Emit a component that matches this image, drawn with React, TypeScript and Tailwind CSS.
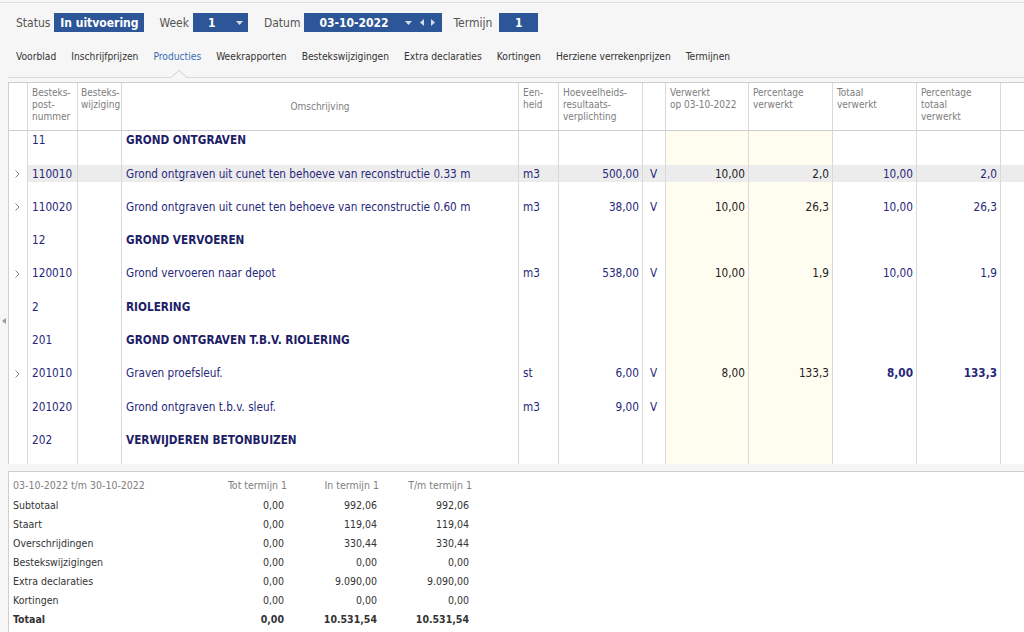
import React from "react";

type Row = {
  arrow?: boolean;
  post: string;
  desc: string;
  bold?: boolean;
  unit?: string;
  qty?: string;
  v?: string;
  done?: string;
  pct?: string;
  tot?: string;
  pctTot?: string;
  strongTot?: boolean;
  hl?: boolean;
};

const rows: Row[] = [
  { post: "11", desc: "GROND ONTGRAVEN", bold: true },
  {
    arrow: true,
    post: "110010",
    desc: "Grond ontgraven uit cunet ten behoeve van reconstructie 0.33 m",
    unit: "m3",
    qty: "500,00",
    v: "V",
    done: "10,00",
    pct: "2,0",
    tot: "10,00",
    pctTot: "2,0",
    hl: true,
  },
  {
    arrow: true,
    post: "110020",
    desc: "Grond ontgraven uit cunet ten behoeve van reconstructie 0.60 m",
    unit: "m3",
    qty: "38,00",
    v: "V",
    done: "10,00",
    pct: "26,3",
    tot: "10,00",
    pctTot: "26,3",
  },
  { post: "12", desc: "GROND VERVOEREN", bold: true },
  {
    arrow: true,
    post: "120010",
    desc: "Grond vervoeren naar depot",
    unit: "m3",
    qty: "538,00",
    v: "V",
    done: "10,00",
    pct: "1,9",
    tot: "10,00",
    pctTot: "1,9",
  },
  { post: "2", desc: "RIOLERING", bold: true },
  { post: "201", desc: "GROND ONTGRAVEN T.B.V. RIOLERING", bold: true },
  {
    arrow: true,
    post: "201010",
    desc: "Graven proefsleuf.",
    unit: "st",
    qty: "6,00",
    v: "V",
    done: "8,00",
    pct: "133,3",
    tot: "8,00",
    pctTot: "133,3",
    strongTot: true,
  },
  { post: "201020", desc: "Grond ontgraven t.b.v. sleuf.", unit: "m3", qty: "9,00", v: "V" },
  { post: "202", desc: "VERWIJDEREN BETONBUIZEN", bold: true },
];

const summary = [
  ["Subtotaal", "0,00", "992,06", "992,06"],
  ["Staart", "0,00", "119,04", "119,04"],
  ["Overschrijdingen", "0,00", "330,44", "330,44"],
  ["Bestekswijzigingen", "0,00", "0,00", "0,00"],
  ["Extra declaraties", "0,00", "9.090,00", "9.090,00"],
  ["Kortingen", "0,00", "0,00", "0,00"],
];

const tabs = [
  "Voorblad",
  "Inschrijfprijzen",
  "Producties",
  "Weekrapporten",
  "Bestekswijzigingen",
  "Extra declaraties",
  "Kortingen",
  "Herziene verrekenprijzen",
  "Termijnen",
];

function Caret() {
  return (
    <svg width="7" height="4" viewBox="0 0 7 4" className="fill-white/80">
      <path d="M0 0h7L3.5 4z" />
    </svg>
  );
}

function Arrow({ dir }: { dir: "l" | "r" }) {
  return (
    <svg width="4" height="7" viewBox="0 0 4 7" className="fill-white/80">
      {dir === "l" ? <path d="M4 0v7L0 3.5z" /> : <path d="M0 0v7l4-3.5z" />}
    </svg>
  );
}

function Cell({
  w,
  children,
  align = "left",
  yellow,
  hl,
  className = "",
}: {
  w: string;
  children?: React.ReactNode;
  align?: "left" | "right";
  yellow?: boolean;
  hl?: boolean;
  className?: string;
}) {
  return (
    <div className={`${w} shrink-0 h-full border-r border-[#d9d9d9] ${yellow ? "bg-[#fffdf0]" : ""}`}>
      <div
        className={`mt-[1px] h-[17px] pt-[1px] flex items-center px-[4px] whitespace-nowrap ${
          align === "right" ? "justify-end pr-[3px]" : ""
        } ${hl ? "bg-[#ececec]" : ""} ${className}`}
      >
        {children}
      </div>
    </div>
  );
}

export default function App() {
  return (
    <div className="w-[1024px] h-[632px] overflow-hidden bg-[#f6f6f6] text-[11px] font-['DejaVu_Sans_Condensed','DejaVu_Sans',sans-serif] text-[#333]">
      {/* top rule */}
      <div className="h-[3px] border-b border-[#dedede]" />

      {/* status bar */}
      <div className="flex items-center h-[19px] mt-[10px] pl-[16px] text-[12px] text-[#555]">
        <span>Status</span>
        <div className="ml-[4px] w-[90px] h-[19px] bg-[#2c5697] text-white font-bold flex items-center justify-center">
          In uitvoering
        </div>
        <span className="ml-[15px]">Week</span>
        <div className="ml-[4px] w-[55px] h-[19px] bg-[#2c5697] text-white font-bold flex items-center pl-[15px] pr-[5px]">
          <span className="flex-1">1</span>
          <Caret />
        </div>
        <span className="ml-[16px]">Datum</span>
        <div className="ml-[4px] w-[138px] h-[19px] bg-[#2c5697] text-white font-bold flex items-center pl-[15px] pr-[7px]">
          <span className="flex-1">03-10-2022</span>
          <Caret />
          <span className="ml-[8px] flex gap-[7px]">
            <Arrow dir="l" />
            <Arrow dir="r" />
          </span>
        </div>
        <span className="ml-[11px]">Termijn</span>
        <div className="ml-[7px] w-[39px] h-[19px] bg-[#2c5697] text-white font-bold flex items-center justify-center">
          1
        </div>
      </div>

      {/* tabs */}
      <div className="relative mt-[17px] ml-[8px] h-[29px] border-b border-[#dadada]">
        <div className="flex gap-[15px] pl-[8px] text-[10.2px] text-[#333]">
          {tabs.map((t) => (
            <span key={t} className={t === "Producties" ? "text-[#3a6cb4]" : ""}>
              {t}
            </span>
          ))}
        </div>
        <svg className="absolute left-[163px] bottom-[-1px]" width="16" height="8" viewBox="0 0 16 8">
          <path d="M0 7.5L8 0.5L16 7.5" fill="#f6f6f6" stroke="#cfcfcf" />
          <rect x="1" y="7" width="14" height="1" fill="#f6f6f6" />
        </svg>
      </div>

      {/* grid */}
      <div className="relative mt-[4px]">
        <svg className="absolute left-[2px] top-[236px]" width="4" height="6" viewBox="0 0 4 6">
          <path d="M4 0v6L0 3z" fill="#9a9a9a" />
        </svg>
        <div className="ml-[8px] border-l border-t border-[#cfcfcf] bg-white">
          {/* header */}
          <div className="flex h-[48px] border-b border-[#cfcfcf] text-[10px] leading-[12px] text-[#7d7d7d]">
            <div className="w-[19px] shrink-0 border-r border-[#d9d9d9]" />
            <div className="w-[50px] shrink-0 border-r border-[#d9d9d9] px-[4px] pt-[4px]">
              Besteks-
              <br />
              post-
              <br />
              nummer
            </div>
            <div className="w-[44px] shrink-0 border-r border-[#d9d9d9] px-[3px] pt-[4px]">
              Besteks-
              <br />
              wijziging
            </div>
            <div className="w-[397px] shrink-0 border-r border-[#d9d9d9] flex items-center justify-center">
              Omschrijving
            </div>
            <div className="w-[40px] shrink-0 border-r border-[#d9d9d9] px-[4px] pt-[4px]">
              Een-
              <br />
              heid
            </div>
            <div className="w-[84px] shrink-0 border-r border-[#d9d9d9] px-[4px] pt-[4px]">
              Hoeveelheids-
              <br />
              resultaats-
              <br />
              verplichting
            </div>
            <div className="w-[23px] shrink-0 border-r border-[#d9d9d9]" />
            <div className="w-[83px] shrink-0 border-r border-[#d9d9d9] px-[4px] pt-[4px]">
              Verwerkt
              <br />
              op 03-10-2022
            </div>
            <div className="w-[84px] shrink-0 border-r border-[#d9d9d9] px-[4px] pt-[4px]">
              Percentage
              <br />
              verwerkt
            </div>
            <div className="w-[84px] shrink-0 border-r border-[#d9d9d9] px-[4px] pt-[4px]">
              Totaal
              <br />
              verwerkt
            </div>
            <div className="w-[84px] shrink-0 border-r border-[#d9d9d9] px-[4px] pt-[4px]">
              Percentage
              <br />
              totaal
              <br />
              verwerkt
            </div>
            <div className="flex-1" />
          </div>

          {/* body */}
          {rows.map((r, i) => (
            <div key={i} className="flex h-[33.3px] text-[11.7px] text-[#27277a]">
              <div className="w-[19px] shrink-0 h-full border-r border-[#d9d9d9]">
                <div className="mt-[1px] h-[17px] flex items-center pl-[6px]">
                  {r.arrow && (
                    <svg width="5" height="8" viewBox="0 0 5 8">
                      <path d="M0.5 0.5L4 4L0.5 7.5" fill="none" stroke="#808080" />
                    </svg>
                  )}
                </div>
              </div>
              <Cell w="w-[50px]" hl={r.hl}>
                {r.post}
              </Cell>
              <Cell w="w-[44px]" hl={r.hl} />
              <Cell w="w-[397px]" hl={r.hl} className={r.bold ? "font-bold text-[#1d1d66]" : ""}>
                {r.desc}
              </Cell>
              <Cell w="w-[40px]" hl={r.hl}>
                {r.unit}
              </Cell>
              <Cell w="w-[84px]" hl={r.hl} align="right">
                {r.qty}
              </Cell>
              <Cell w="w-[23px]" hl={r.hl} className="pl-[7px]">
                {r.v}
              </Cell>
              <Cell w="w-[83px]" hl={r.hl} yellow align="right" className="text-[#222]">
                {r.done}
              </Cell>
              <Cell w="w-[84px]" hl={r.hl} yellow align="right" className="text-[#222]">
                {r.pct}
              </Cell>
              <Cell w="w-[84px]" hl={r.hl} align="right" className={r.strongTot ? "font-bold" : ""}>
                {r.tot}
              </Cell>
              <Cell w="w-[84px]" hl={r.hl} align="right" className={r.strongTot ? "font-bold" : ""}>
                {r.pctTot}
              </Cell>
              <div className="flex-1 h-full">
                <div className={`mt-[1px] h-[17px] ${r.hl ? "bg-[#ececec]" : ""}`} />
              </div>
            </div>
          ))}
        </div>

        {/* totals */}
        <div className="mt-[7px] ml-[8px] h-[170px] border-l border-t border-[#cfcfcf] bg-white pt-[4px] pl-[4px] text-[10.5px] text-[#333]">
          <div className="flex h-[20px] items-center text-[#808080]">
            <span className="w-[180px]">03-10-2022 t/m 30-10-2022</span>
            <span className="w-[94px] text-right">Tot termijn 1</span>
            <span className="w-[92px] text-right">In termijn 1</span>
            <span className="w-[93px] text-right">T/m termijn 1</span>
          </div>
          {summary.map((s) => (
            <div key={s[0]} className="flex h-[19px] items-center">
              <span className="w-[180px]">{s[0]}</span>
              <span className="w-[91px] text-right">{s[1]}</span>
              <span className="w-[93px] text-right">{s[2]}</span>
              <span className="w-[92px] text-right">{s[3]}</span>
            </div>
          ))}
          <div className="flex h-[19px] items-center font-bold">
            <span className="w-[180px]">Totaal</span>
            <span className="w-[91px] text-right">0,00</span>
            <span className="w-[93px] text-right">10.531,54</span>
            <span className="w-[92px] text-right">10.531,54</span>
          </div>
        </div>
      </div>
    </div>
  );
}
